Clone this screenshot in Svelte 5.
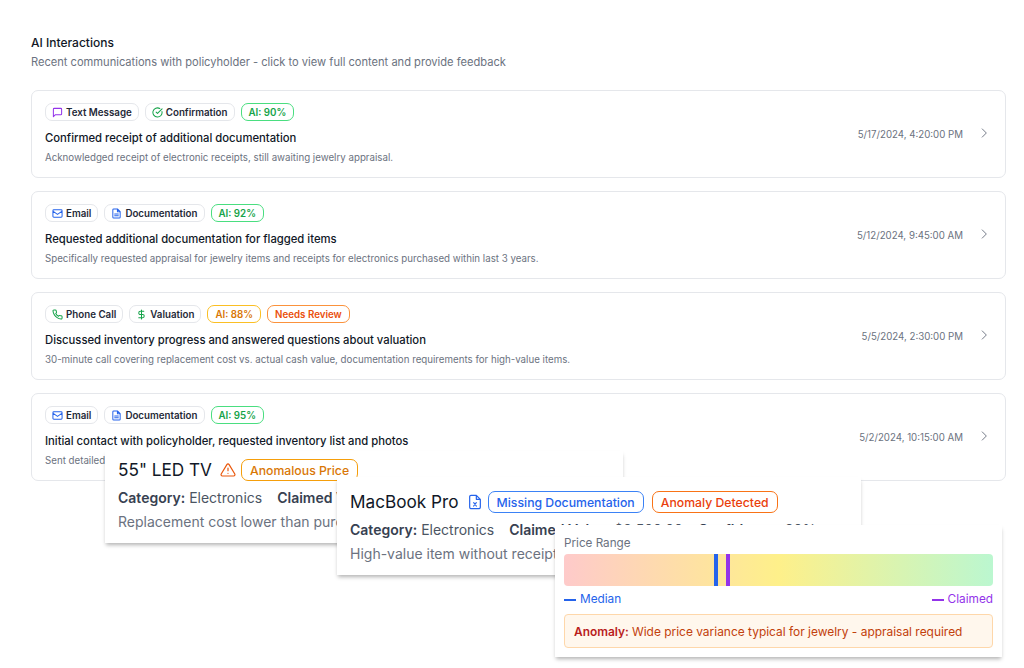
<script>
	const icons = {
		message: { color: '#9333ea', d: 'M21 15a2 2 0 0 1-2 2H7l-4 4V5a2 2 0 0 1 2-2h14a2 2 0 0 1 2 2z' },
		check: { color: '#16a34a', d: 'M21.8 10A10 10 0 1 1 17 3.3M9 11l3 3L22 4' },
		mail: { color: '#2563eb', d: 'M4 4h16a2 2 0 0 1 2 2v12a2 2 0 0 1-2 2H4a2 2 0 0 1-2-2V6a2 2 0 0 1 2-2zM22 7l-10 7L2 7' },
		doc: { color: '#2563eb', d: 'M14 2H6a2 2 0 0 0-2 2v16a2 2 0 0 0 2 2h12a2 2 0 0 0 2-2V8zM14 2v6h6M8 13h8M8 17h8' },
		phone: { color: '#16a34a', d: 'M22 16.9v3a2 2 0 0 1-2.2 2 19.8 19.8 0 0 1-8.6-3.1 19.5 19.5 0 0 1-6-6A19.8 19.8 0 0 1 2.1 4.2 2 2 0 0 1 4.1 2h3a2 2 0 0 1 2 1.7c.1 1 .4 1.9.7 2.8a2 2 0 0 1-.5 2.1L8.1 9.9a16 16 0 0 0 6 6l1.3-1.3a2 2 0 0 1 2.1-.4c.9.3 1.8.6 2.8.7a2 2 0 0 1 1.7 2z' },
		dollar: { color: '#16a34a', d: 'M12 2v20M17 5H9.5a3.5 3.5 0 0 0 0 7h5a3.5 3.5 0 0 1 0 7H6' }
	};

	const interactions = [
		{
			tags: [['message', 'Text Message'], ['check', 'Confirmation']],
			score: { text: 'AI: 90%', tone: 'green' },
			title: 'Confirmed receipt of additional documentation',
			desc: 'Acknowledged receipt of electronic receipts, still awaiting jewelry appraisal.',
			date: '5/17/2024, 4:20:00 PM'
		},
		{
			tags: [['mail', 'Email'], ['doc', 'Documentation']],
			score: { text: 'AI: 92%', tone: 'green' },
			title: 'Requested additional documentation for flagged items',
			desc: 'Specifically requested appraisal for jewelry items and receipts for electronics purchased within last 3 years.',
			date: '5/12/2024, 9:45:00 AM'
		},
		{
			tags: [['phone', 'Phone Call'], ['dollar', 'Valuation']],
			score: { text: 'AI: 88%', tone: 'amber' },
			review: true,
			title: 'Discussed inventory progress and answered questions about valuation',
			desc: '30-minute call covering replacement cost vs. actual cash value, documentation requirements for high-value items.',
			date: '5/5/2024, 2:30:00 PM'
		},
		{
			tags: [['mail', 'Email'], ['doc', 'Documentation']],
			score: { text: 'AI: 95%', tone: 'green' },
			title: 'Initial contact with policyholder, requested inventory list and photos',
			desc: 'Sent detailed instructions for documenting household contents after the loss.',
			date: '5/2/2024, 10:15:00 AM'
		}
	];
</script>

<main class="page">
	<h2>AI Interactions</h2>
	<p class="lead">Recent communications with policyholder - click to view full content and provide feedback</p>

	<div class="list">
		{#each interactions as item}
			<article class="row">
				<div class="body">
					<div class="tags">
						{#each item.tags as [icon, label]}
							<span class="chip">
								<svg viewBox="0 0 24 24" width="11" height="11" fill="none" stroke={icons[icon].color} stroke-width="2.2" stroke-linecap="round" stroke-linejoin="round"><path d={icons[icon].d} /></svg>
								{label}
							</span>
						{/each}
						<span class="chip score {item.score.tone}">{item.score.text}</span>
						{#if item.review}
							<span class="chip score orange">Needs Review</span>
						{/if}
					</div>
					<h3>{item.title}</h3>
					<p class="desc">{item.desc}</p>
				</div>
				<time>{item.date}</time>
				<svg class="chev" viewBox="0 0 24 24" width="14" height="14" fill="none" stroke="#6b7280" stroke-width="1.6" stroke-linecap="round" stroke-linejoin="round"><path d="M9 5l7 7-7 7" /></svg>
			</article>
		{/each}
	</div>

	<section class="float tv">
		<div class="head">
			<span class="name">55" LED TV</span>
			<svg viewBox="0 0 24 24" width="16" height="16" fill="none" stroke="#ea580c" stroke-width="1.8" stroke-linecap="round" stroke-linejoin="round"><path d="M10.3 3.9 1.8 18a2 2 0 0 0 1.7 3h17a2 2 0 0 0 1.7-3L13.7 3.9a2 2 0 0 0-3.4 0zM12 9v4M12 17h.01" /></svg>
			<span class="pill amber-pill">Anomalous Price</span>
		</div>
		<div class="facts"><span><b>Category:</b> Electronics</span><span><b>Claimed Value:</b> $1,200.00</span></div>
		<p class="note">Replacement cost lower than purchase price on record</p>
	</section>

	<section class="float mac">
		<div class="head">
			<span class="name">MacBook Pro</span>
			<svg viewBox="0 0 24 24" width="16" height="16" fill="none" stroke="#2563eb" stroke-width="1.8" stroke-linecap="round" stroke-linejoin="round"><path d="M14 2H6a2 2 0 0 0-2 2v16a2 2 0 0 0 2 2h12a2 2 0 0 0 2-2V8zM14 2v6h6M10 13l4 5M14 13l-4 5" /></svg>
			<span class="pill blue-pill">Missing Documentation</span>
			<span class="pill red-pill">Anomaly Detected</span>
		</div>
		<div class="facts"><span><b>Category:</b> Electronics</span><span><b>Claimed Value:</b> $2,500.00</span><span><b>Confidence:</b> 90%</span></div>
		<p class="note">High-value item without receipt</p>
	</section>

	<section class="float range">
		<div class="range-label">Price Range</div>
		<div class="bar">
			<i class="mark median"></i>
			<i class="mark claimed"></i>
		</div>
		<div class="legend">
			<span class="l-median"><i></i>Median</span>
			<span class="l-claimed"><i></i>Claimed</span>
		</div>
		<div class="alert"><b>Anomaly:</b> Wide price variance typical for jewelry - appraisal required</div>
	</section>
</main>

<style>
	:global(body) {
		background: #fff;
		font-family: Inter, 'Liberation Sans', sans-serif;
	}

	.page {
		position: relative;
		height: 668px;
		box-sizing: border-box;
		padding: 35px 18px 0 31px;
		overflow: hidden;
	}

	h2 {
		margin: 0;
		font-size: 12px;
		line-height: 16px;
		font-weight: 500;
		color: #111827;
	}

	.lead {
		margin: 4px 0 0;
		font-size: 11.12px;
		line-height: 14px;
		color: #6b7280;
	}

	.list {
		display: flex;
		flex-direction: column;
		gap: 13px;
		margin-top: 21px;
	}

	.row {
		display: flex;
		align-items: center;
		height: 88px;
		box-sizing: border-box;
		padding: 0 15px 1px 13px;
		border: 1px solid #e5e7eb;
		border-radius: 7px;
		background: #fff;
	}

	.body {
		flex: 1;
		min-width: 0;
	}

	.tags {
		display: flex;
		gap: 6px;
	}

	.chip {
		display: inline-flex;
		align-items: center;
		gap: 3px;
		height: 18px;
		box-sizing: border-box;
		padding: 0 6px;
		border: 1px solid #e5e7eb;
		border-radius: 7px;
		font-size: 9.75px;
		font-weight: 600;
		color: #1f2937;
	}

	.score {
		padding: 0 7px;
	}

	.green {
		border-color: #4ade80;
		color: #16a34a;
	}

	.amber {
		border-color: #fbbf24;
		color: #d97706;
	}

	.orange {
		border-color: #fb923c;
		color: #ea4f0c;
	}

	h3 {
		margin: 10px 0 0;
		font-size: 11.27px;
		line-height: 15px;
		font-weight: 500;
		color: #111827;
	}

	.desc {
		margin: 5px 0 0;
		font-size: 9.73px;
		line-height: 13px;
		color: #6b7280;
	}

	time {
		font-size: 9.7px;
		color: #6b7280;
		margin-right: 14px;
		margin-bottom: -1px;
	}

	.chev {
		flex: none;
		margin-right: -1px;
		margin-top: -1px;
	}

	.float {
		position: absolute;
		box-sizing: border-box;
		background: #fff;
		box-shadow: 0 3px 4px -1px rgba(0, 0, 0, 0.3);
		overflow: hidden;
	}

	.tv {
		left: 105px;
		top: 451px;
		width: 518px;
		height: 92px;
		padding: 8px 13px;
	}

	.mac {
		left: 337px;
		top: 477px;
		width: 524px;
		height: 98px;
		padding: 14px 13px;
	}

	.range {
		left: 555px;
		top: 525px;
		width: 447px;
		height: 132px;
		padding: 10px 9px 9px;
	}

	.head {
		display: flex;
		align-items: center;
		gap: 5px;
	}

	.name {
		font-size: 17.2px;
		line-height: 22px;
		color: #111827;
		margin-right: 3px;
	}

	.pill {
		display: inline-flex;
		align-items: center;
		height: 22px;
		box-sizing: border-box;
		padding: 0 8px;
		border: 1px solid;
		border-radius: 7px;
		font-size: 12.25px;
		font-weight: 500;
	}

	.pill + .pill {
		margin-left: 3px;
	}

	.amber-pill {
		border-color: #f59e0b;
		color: #d97706;
	}

	.blue-pill {
		border-color: #3b82f6;
		color: #2563eb;
	}

	.red-pill {
		border-color: #f97316;
		color: #ea3f0c;
	}

	.facts {
		display: flex;
		gap: 15px;
		margin-top: 8px;
		font-size: 14px;
		line-height: 18px;
		color: #4b5563;
		white-space: nowrap;
	}

	.facts b {
		font-weight: 600;
		color: #374151;
	}

	.note {
		margin: 6px 0 0;
		font-size: 14px;
		line-height: 18px;
		color: #6b7280;
		white-space: nowrap;
	}

	.range-label {
		padding-top: 1px;
		font-size: 11.7px;
		line-height: 15px;
		color: #6b7280;
	}

	.bar {
		position: relative;
		height: 32px;
		margin-top: 3px;
		border-radius: 4px;
		background: linear-gradient(90deg, #fecaca, #fef08a 50%, #bbf7d0);
	}

	.mark {
		position: absolute;
		top: 0;
		bottom: 0;
		width: 4px;
	}

	.median {
		left: 150px;
		background: #2563eb;
	}

	.claimed {
		left: 162px;
		background: #9333ea;
	}

	.legend {
		display: flex;
		justify-content: space-between;
		margin-top: 6px;
		font-size: 11.8px;
		line-height: 15px;
	}

	.legend span {
		display: flex;
		align-items: center;
		gap: 4px;
	}

	.legend i {
		width: 12px;
		height: 2px;
	}

	.l-median {
		color: #2563eb;
	}

	.l-median i {
		background: #2563eb;
	}

	.l-claimed {
		color: #9333ea;
	}

	.l-claimed i {
		background: #9333ea;
	}

	.alert {
		margin-top: 7px;
		height: 34px;
		box-sizing: border-box;
		padding: 0 9px;
		display: flex;
		align-items: center;
		gap: 3px;
		border: 1px solid #fed7aa;
		border-radius: 4px;
		background: #fff7ed;
		font-size: 11.95px;
		color: #c2410c;
	}

	.alert b {
		font-weight: 600;
		color: #b91c1c;
	}
</style>
